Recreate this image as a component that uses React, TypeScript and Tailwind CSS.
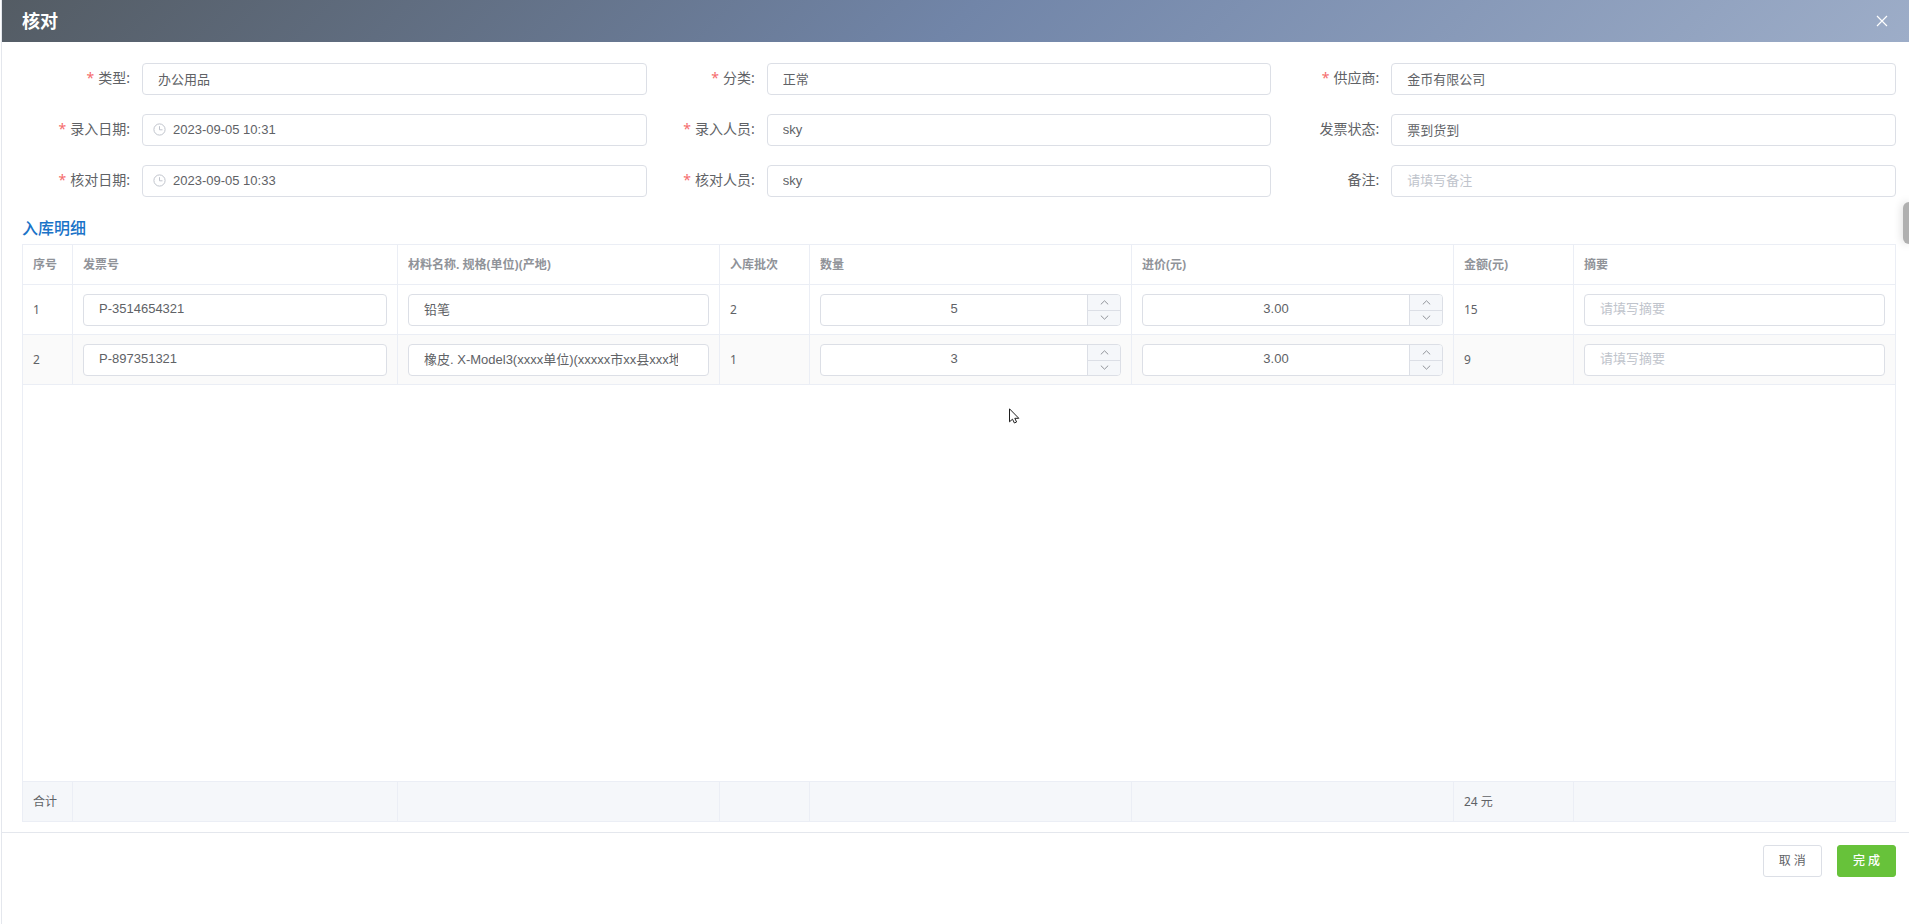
import { useState } from "react";
import type { ReactNode } from "react";

interface FormItemProps {
  id: string;
  label: string;
  required?: boolean;
  children: ReactNode;
}

interface DetailRow {
  invoice: string;
  material: string;
  batch: number;
  quantity: number;
  price: number;
  remark: string;
}

const inputClass =
  "block h-8 w-full rounded border border-[#dcdfe6] bg-white pb-0.5 text-[13px] text-[#606266] outline-none placeholder:text-[#c0c4cc] focus:border-[#409eff] font-['Liberation_Sans','Noto_Sans_CJK_SC',sans-serif]";

const columns = [
  { title: "序号", width: "w-[50px]" },
  { title: "发票号", width: "w-[325px]" },
  { title: "材料名称. 规格(单位)(产地)", width: "" },
  { title: "入库批次", width: "w-[90px]" },
  { title: "数量", width: "" },
  { title: "进价(元)", width: "" },
  { title: "金额(元)", width: "w-[120px]" },
  { title: "摘要", width: "" },
];

const initialRows: DetailRow[] = [
  {
    invoice: "P-3514654321",
    material: "铅笔",
    batch: 2,
    quantity: 5,
    price: 3,
    remark: "",
  },
  {
    invoice: "P-897351321",
    material: "橡皮. X-Model3(xxxx单位)(xxxxx市xx县xxx地区)",
    batch: 1,
    quantity: 3,
    price: 3,
    remark: "",
  },
];

function FormItem({ id, label, required, children }: FormItemProps) {
  return (
    <div className="flex">
      <label
        htmlFor={id}
        className="h-8 w-[120px] shrink-0 pr-3 text-right text-sm leading-[30px] text-[#606266]"
      >
        {required && <span className="mr-1 text-[#f56c6c]">*</span>}
        {label}:
      </label>
      <div className="relative min-w-0 flex-1">{children}</div>
    </div>
  );
}

function TextField({
  id,
  label,
  required,
  value,
  placeholder,
}: {
  id: string;
  label: string;
  required?: boolean;
  value: string;
  placeholder?: string;
}) {
  return (
    <FormItem id={id} label={label} required={required}>
      <input
        id={id}
        className={`${inputClass} px-[15px]`}
        defaultValue={value}
        placeholder={placeholder}
      />
    </FormItem>
  );
}

function DateField({ id, label, value }: { id: string; label: string; value: string }) {
  return (
    <FormItem id={id} label={label} required>
      <input id={id} className={`${inputClass} px-[30px]`} defaultValue={value} />
      <svg
        className="absolute top-[9px] left-[11px] h-[13px] w-[13px]"
        viewBox="0 0 13 13"
        fill="none"
        stroke="#c0c4cc"
      >
        <circle cx="6.5" cy="6.5" r="5.6" />
        <path d="M6.5 3.2v3.6h3" />
      </svg>
    </FormItem>
  );
}

function NumberInput({
  label,
  value,
  precision,
  onChange,
}: {
  label: string;
  value: number;
  precision: number;
  onChange: (value: number) => void;
}) {
  return (
    <div className="flex h-8 overflow-hidden rounded border border-[#dcdfe6] bg-white">
      <input
        aria-label={label}
        className="min-w-0 flex-1 px-[15px] pb-0.5 text-center font-['Liberation_Sans',sans-serif] text-[13px] text-[#606266] outline-none"
        value={value.toFixed(precision)}
        onChange={(e) => onChange(Number(e.target.value) || 0)}
      />
      <div className="flex w-[33px] flex-col border-l border-[#dcdfe6] bg-[#f5f7fa]">
        <button
          type="button"
          aria-label="增加"
          className="flex h-4 items-center justify-center border-b border-[#dcdfe6]"
          onClick={() => onChange(value + 1)}
        >
          <svg className="h-[5px] w-[9px]" viewBox="0 0 9 5" fill="none" stroke="#909399">
            <path d="M0.8 4.4 4.5 0.8 8.2 4.4" />
          </svg>
        </button>
        <button
          type="button"
          aria-label="减少"
          className="flex flex-1 items-center justify-center"
          onClick={() => onChange(Math.max(0, value - 1))}
        >
          <svg className="h-[5px] w-[9px]" viewBox="0 0 9 5" fill="none" stroke="#909399">
            <path d="M0.8 0.6 4.5 4.2 8.2 0.6" />
          </svg>
        </button>
      </div>
    </div>
  );
}

export default function App() {
  const [rows, setRows] = useState(initialRows);

  const updateRow = (index: number, patch: Partial<DetailRow>) => {
    setRows(rows.map((row, i) => (i === index ? { ...row, ...patch } : row)));
  };

  const total = rows.reduce((sum, row) => sum + row.quantity * row.price, 0);
  const cell = "border-r border-b border-[#ebeef5] px-2.5";

  return (
    <div className="relative h-screen min-h-[560px] overflow-hidden bg-white pl-px font-['Noto_Sans','Noto_Sans_CJK_SC',sans-serif]">
      <div className="flex h-full flex-col border-l border-[#e4e7ed]">
        <header className="flex h-[42px] shrink-0 items-center justify-between bg-linear-135 from-[#545c64] via-[#7185a8] to-[#9dadc8] pr-5 pl-5">
          <h1 className="text-lg leading-6 font-bold text-white">核对</h1>
          <button type="button" aria-label="关闭" className="p-px">
            <svg className="h-3 w-3" viewBox="0 0 12 12" fill="none" stroke="#fff" strokeWidth="1.2">
              <path d="M1 1l10 10M11 1L1 11" />
            </svg>
          </button>
        </header>

        <main className="flex min-h-0 flex-1 flex-col pt-[21px] pr-[13px] pb-2.5 pl-5">
          <form className="grid grid-cols-3 gap-y-[19px]">
            <TextField id="type" label="类型" required value="办公用品" />
            <TextField id="category" label="分类" required value="正常" />
            <TextField id="supplier" label="供应商" required value="金币有限公司" />
            <DateField id="entryDate" label="录入日期" value="2023-09-05 10:31" />
            <TextField id="entryUser" label="录入人员" required value="sky" />
            <TextField id="invoiceState" label="发票状态" value="票到货到" />
            <DateField id="checkDate" label="核对日期" value="2023-09-05 10:33" />
            <TextField id="checkUser" label="核对人员" required value="sky" />
            <TextField id="note" label="备注" value="" placeholder="请填写备注" />
          </form>

          <h2 className="mt-[19px] mb-1 text-base leading-6 font-medium text-[#1a73c8]">入库明细</h2>

          <div className="min-h-0 flex-1 border-t border-l border-[#ebeef5]">
            <table className="h-full w-full table-fixed border-separate border-spacing-0 text-left text-xs text-[#606266]">
              <colgroup>
                {columns.map((column) => (
                  <col key={column.title} className={column.width} />
                ))}
              </colgroup>
              <thead>
                <tr className="h-10">
                  {columns.map((column) => (
                    <th key={column.title} className={`${cell} font-bold text-[#909399]`}>
                      {column.title}
                    </th>
                  ))}
                </tr>
              </thead>
              <tbody>
                {rows.map((row, index) => (
                  <tr key={row.invoice} className="h-[50px] even:bg-[#fafafa]">
                    <td className={cell}>{index + 1}</td>
                    <td className={cell}>
                      <input
                        aria-label="发票号"
                        className={`${inputClass} pr-[30px] pl-[15px]`}
                        defaultValue={row.invoice}
                      />
                    </td>
                    <td className={cell}>
                      <input
                        aria-label="材料名称"
                        className={`${inputClass} pr-[30px] pl-[15px]`}
                        defaultValue={row.material}
                      />
                    </td>
                    <td className={cell}>{row.batch}</td>
                    <td className={cell}>
                      <NumberInput
                        label="数量"
                        value={row.quantity}
                        precision={0}
                        onChange={(quantity) => updateRow(index, { quantity })}
                      />
                    </td>
                    <td className={cell}>
                      <NumberInput
                        label="进价"
                        value={row.price}
                        precision={2}
                        onChange={(price) => updateRow(index, { price })}
                      />
                    </td>
                    <td className={cell}>{row.quantity * row.price}</td>
                    <td className={cell}>
                      <input
                        aria-label="摘要"
                        className={`${inputClass} px-[15px]`}
                        defaultValue={row.remark}
                        placeholder="请填写摘要"
                      />
                    </td>
                  </tr>
                ))}
                {/* takes up the free height between the rows and the total */}
                <tr>
                  <td colSpan={8} className="border-r border-b border-[#ebeef5]" />
                </tr>
              </tbody>
              <tfoot>
                <tr className="h-10 bg-[#f5f7fa]">
                  {columns.map((column, index) => (
                    <td key={column.title} className={cell}>
                      {index === 0 && "合计"}
                      {index === 6 && `${total} 元`}
                    </td>
                  ))}
                </tr>
              </tfoot>
            </table>
          </div>
        </main>

        <footer className="flex h-[92px] shrink-0 items-start justify-end gap-[15px] border-t border-[#e4e7ed] pt-3 pr-[13px] text-xs">
          <button
            type="button"
            className="h-8 rounded-[3px] border border-[#dcdfe6] bg-white px-[15px] text-[#606266]"
          >
            取 消
          </button>
          <button
            type="button"
            className="h-8 rounded-[3px] border border-[#67c23a] bg-[#67c23a] px-[15px] font-medium text-white"
          >
            完 成
          </button>
        </footer>
      </div>

      <div className="absolute top-[202px] right-0 h-[42px] w-1.5 rounded-l-md bg-[#b0b0b0] shadow-[0_0_10px_rgba(0,0,0,0.2)]" />

      <svg
        className="absolute top-[408px] left-[1009px] h-[17px] w-3"
        viewBox="0 0 12 17"
        fill="#fff"
        stroke="#1f1f1f"
      >
        <path d="M0.5 0.8v13l3-2.6 1.9 3.8 2.2-1-1.8-3.7h4z" />
      </svg>
    </div>
  );
}
